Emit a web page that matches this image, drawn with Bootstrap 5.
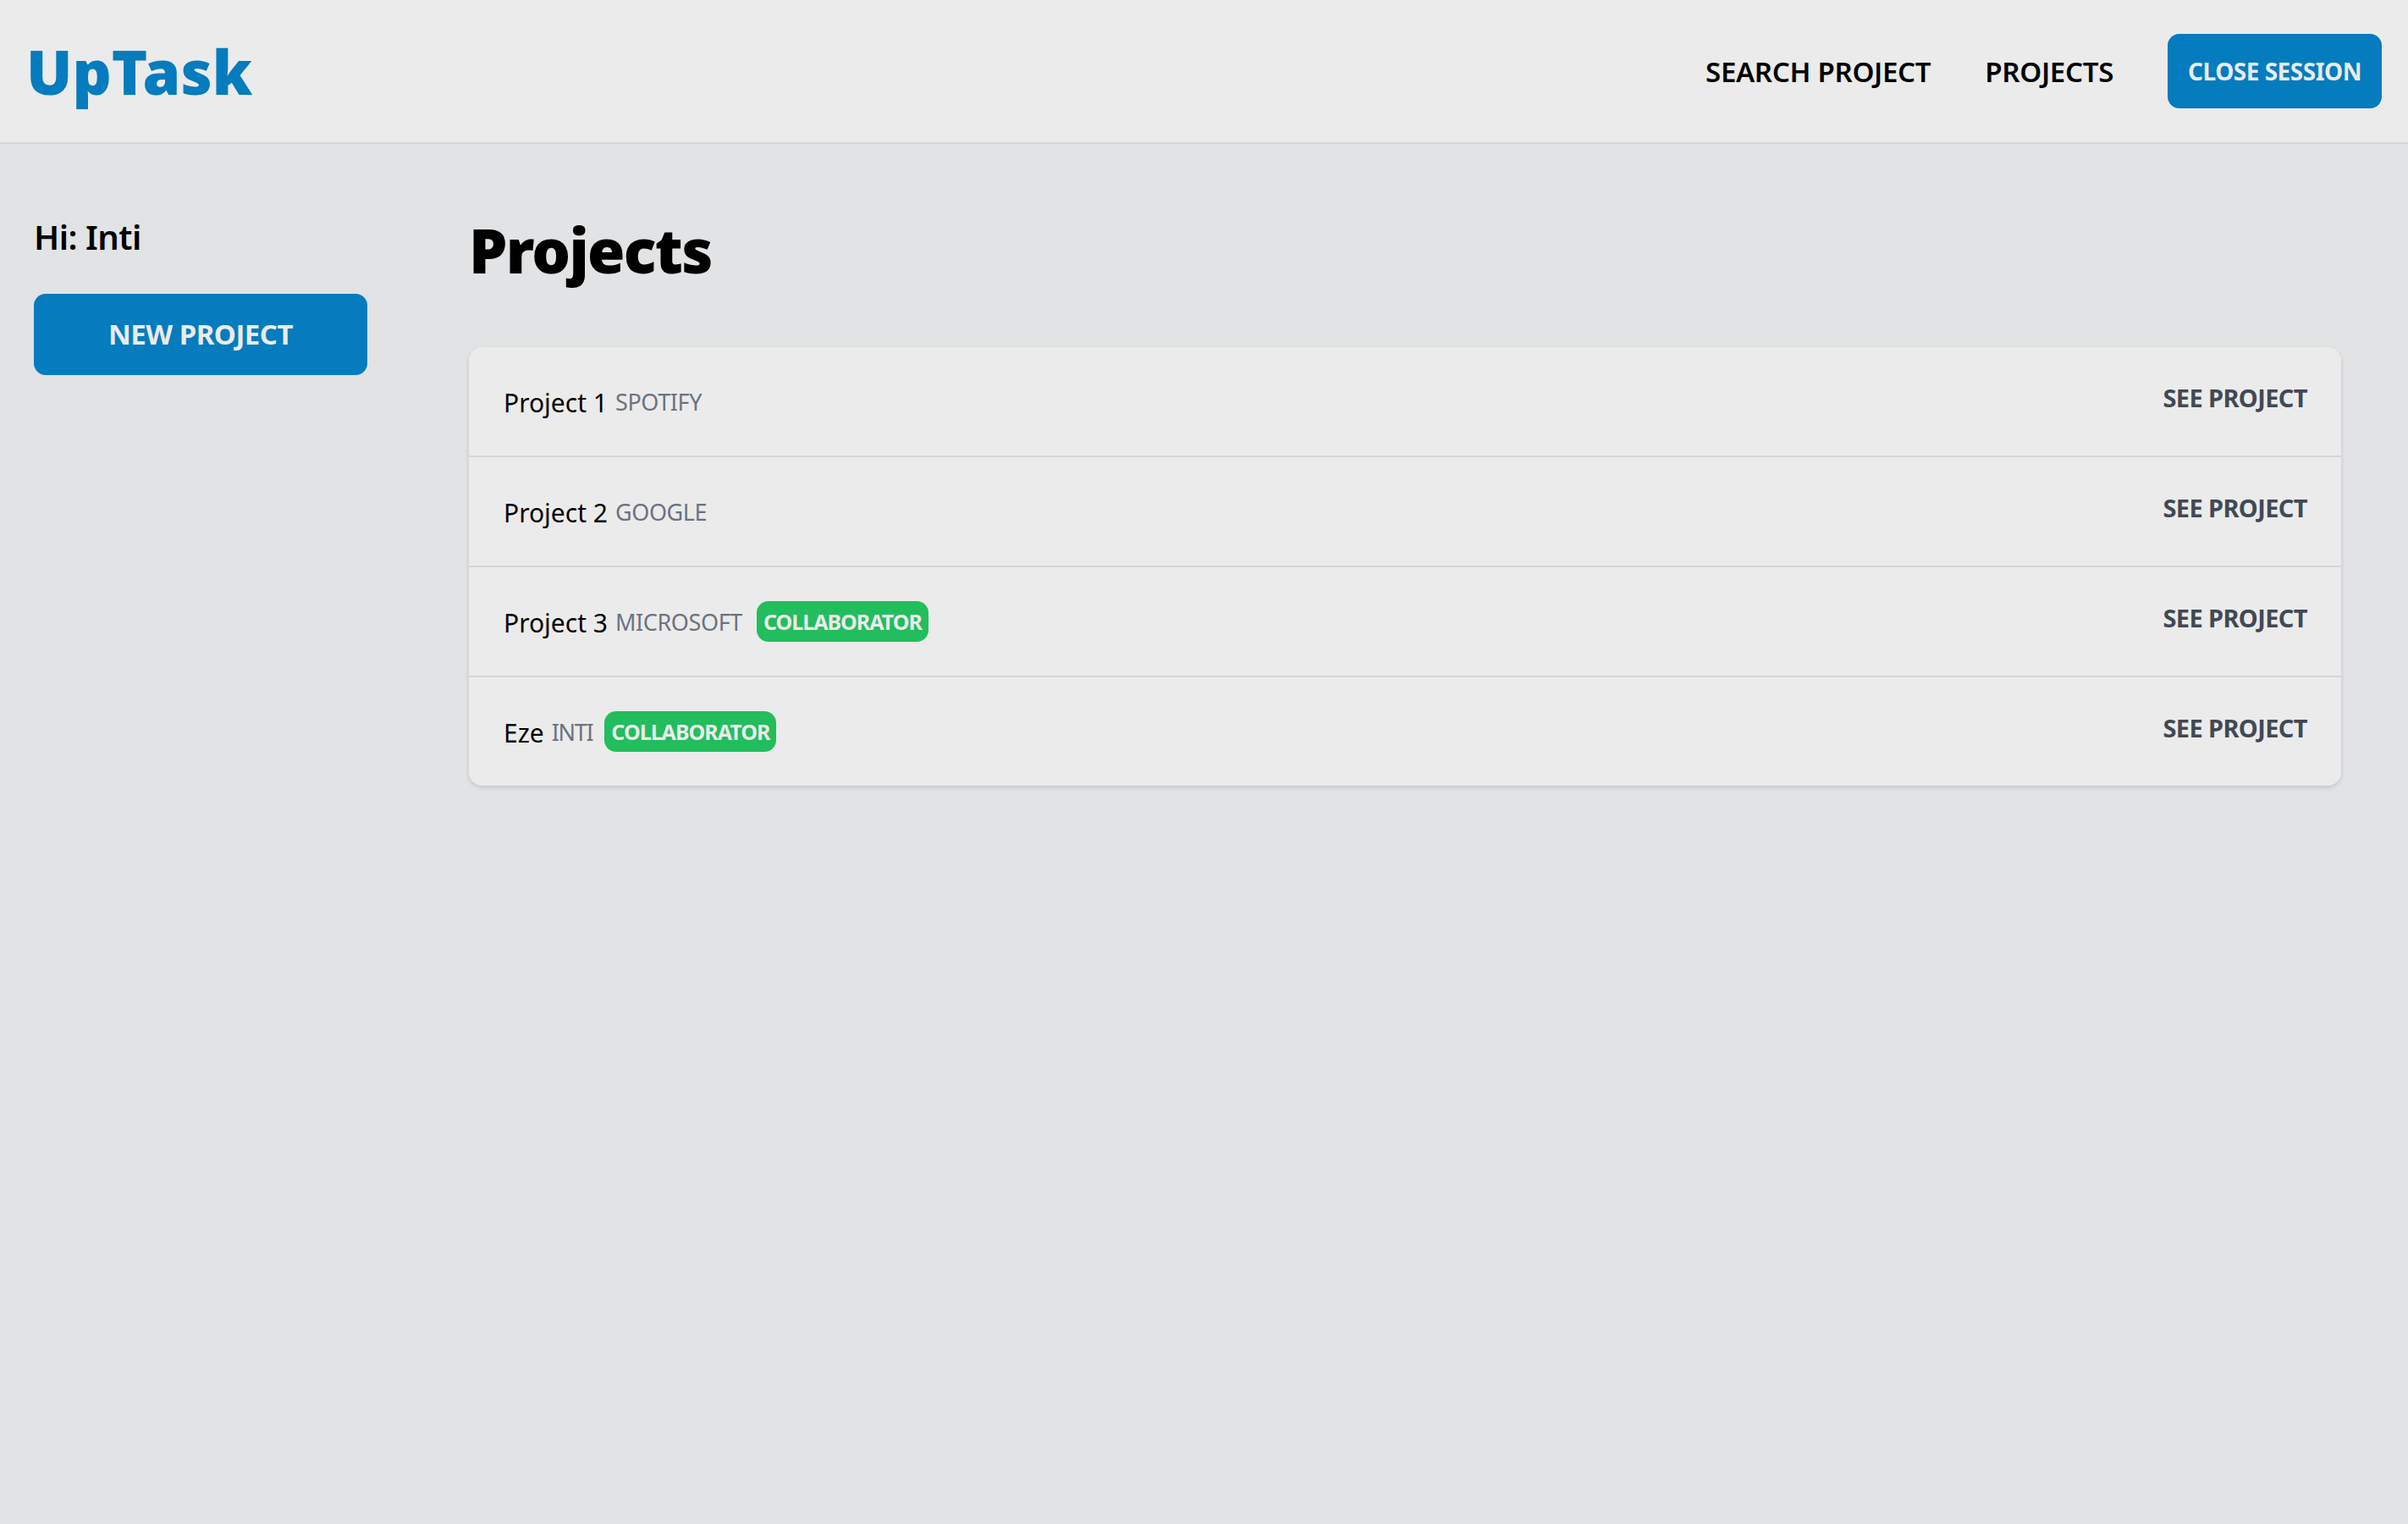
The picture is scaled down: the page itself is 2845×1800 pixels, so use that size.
<!DOCTYPE html>
<html lang="en">
<head>
<meta charset="UTF-8" />
<meta name="viewport" content="width=device-width, initial-scale=1" />
<title>UpTask</title>
<link href="https://cdn.jsdelivr.net/npm/bootstrap@5.3.0/dist/css/bootstrap.min.css" rel="stylesheet" />
<script src="https://cdn.jsdelivr.net/npm/bootstrap@5.3.0/dist/js/bootstrap.bundle.min.js"></script>
<style>
html, body { height: 100%; }
body { background: #e1e3e5; font-family: "Noto Sans", "Open Sans", sans-serif; color: #000; font-size: 29px; }
.top-bar { background: #ebebeb; border-bottom: 2px solid #d5d6da; height: 170px; padding: 40px 31px 40px 31px; }
.brand-name { font-size: 72px; font-weight: 900; color: #047cbd; letter-spacing: 0; line-height: 1; text-decoration: none; }
.top-link { font-size: 33px; font-weight: 600; color: #000; text-decoration: none; letter-spacing: -.3px; padding-top: 2px; }
.top-links { gap: 64px; }
.btn-app { background: #047cbd; border: 0; color: #ebebeb; font-weight: 700; border-radius: 14px; }
.btn-app:hover { background: #036ba3; color: #ebebeb; }
.btn-close-session { width: 253px; height: 88px; font-size: 28px; letter-spacing: -.5px; padding: 0; }
.side-col { width: 514px; padding: 90px 40px 0 40px; flex: none; }
.side-col .hi-text { font-size: 40px; font-weight: 600; line-height: 1; margin: 0 0 47px; letter-spacing: -.5px; }
.side-col .btn-app { width: 394px; height: 96px; font-size: 33px; letter-spacing: -.5px; padding: 0; }
.main-col { padding: 89px 79px 0 40px; }
.page-title { font-size: 72px; font-weight: 900; line-height: 1; margin: 0 0 79px; letter-spacing: -1.75px; }
.project-list { border-radius: 16px; box-shadow: 0 2px 5px rgba(0,0,0,.15); background: #ebebeb; --bs-list-group-bg: #ebebeb; --bs-list-group-border-color: #d5d6da; --bs-list-group-border-width: 2px; --bs-list-group-border-radius: 16px; }
.project-row { height: 130px; padding: 0 40px 0 41px; border-left: 0; border-right: 0; }
.project-row:first-child { border-top: 0; }
.project-row:last-child { border-bottom: 0; height: 128px; }
.project-name { font-size: 30px; color: #000; padding-top: 3px; }
.company-name { font-size: 27px; color: #6b7280; text-transform: uppercase; margin-left: 9px; letter-spacing: -.4px; padding-top: 3px; }
.company-short { letter-spacing: -1.3px; margin-right: -3px; }
.collab-tag { background: #22bd5d; color: #ebebeb; font-size: 25px; font-weight: 700; border-radius: 14px; padding: 0 8px; height: 48px; line-height: 48px; margin-left: 17px; letter-spacing: -1px; }
.see-link { font-size: 29px; font-weight: 700; color: #414955; text-decoration: none; margin-top: -8px; letter-spacing: -.6px; }
</style>
</head>
<body>
<header class="top-bar d-flex align-items-center justify-content-between">
    <a href="#" class="brand-name">UpTask</a>
    <nav class="d-flex align-items-center top-links">
        <a href="#" class="top-link">SEARCH PROJECT</a>
        <a href="#" class="top-link">PROJECTS</a>
        <button type="button" class="btn btn-app btn-close-session">CLOSE SESSION</button>
    </nav>
</header>

<div class="d-flex">
    <aside class="side-col">
        <p class="hi-text">Hi: Inti</p>
        <a href="#" class="btn btn-app d-flex align-items-center justify-content-center">NEW PROJECT</a>
    </aside>
    <main class="main-col flex-grow-1">
        <h1 class="page-title">Projects</h1>
        <ul class="list-group project-list">
            <li class="list-group-item project-row d-flex align-items-center justify-content-between">
                <div class="d-flex align-items-center"><span class="project-name">Project 1</span><span class="company-name">Spotify</span></div>
                <a href="#" class="see-link">SEE PROJECT</a>
            </li>
            <li class="list-group-item project-row d-flex align-items-center justify-content-between">
                <div class="d-flex align-items-center"><span class="project-name">Project 2</span><span class="company-name">Google</span></div>
                <a href="#" class="see-link">SEE PROJECT</a>
            </li>
            <li class="list-group-item project-row d-flex align-items-center justify-content-between">
                <div class="d-flex align-items-center"><span class="project-name">Project 3</span><span class="company-name">Microsoft</span><span class="collab-tag">COLLABORATOR</span></div>
                <a href="#" class="see-link">SEE PROJECT</a>
            </li>
            <li class="list-group-item project-row d-flex align-items-center justify-content-between">
                <div class="d-flex align-items-center"><span class="project-name">Eze</span><span class="company-name company-short">Inti</span><span class="collab-tag">COLLABORATOR</span></div>
                <a href="#" class="see-link">SEE PROJECT</a>
            </li>
        </ul>
    </main>
</div>
</body>
</html>
